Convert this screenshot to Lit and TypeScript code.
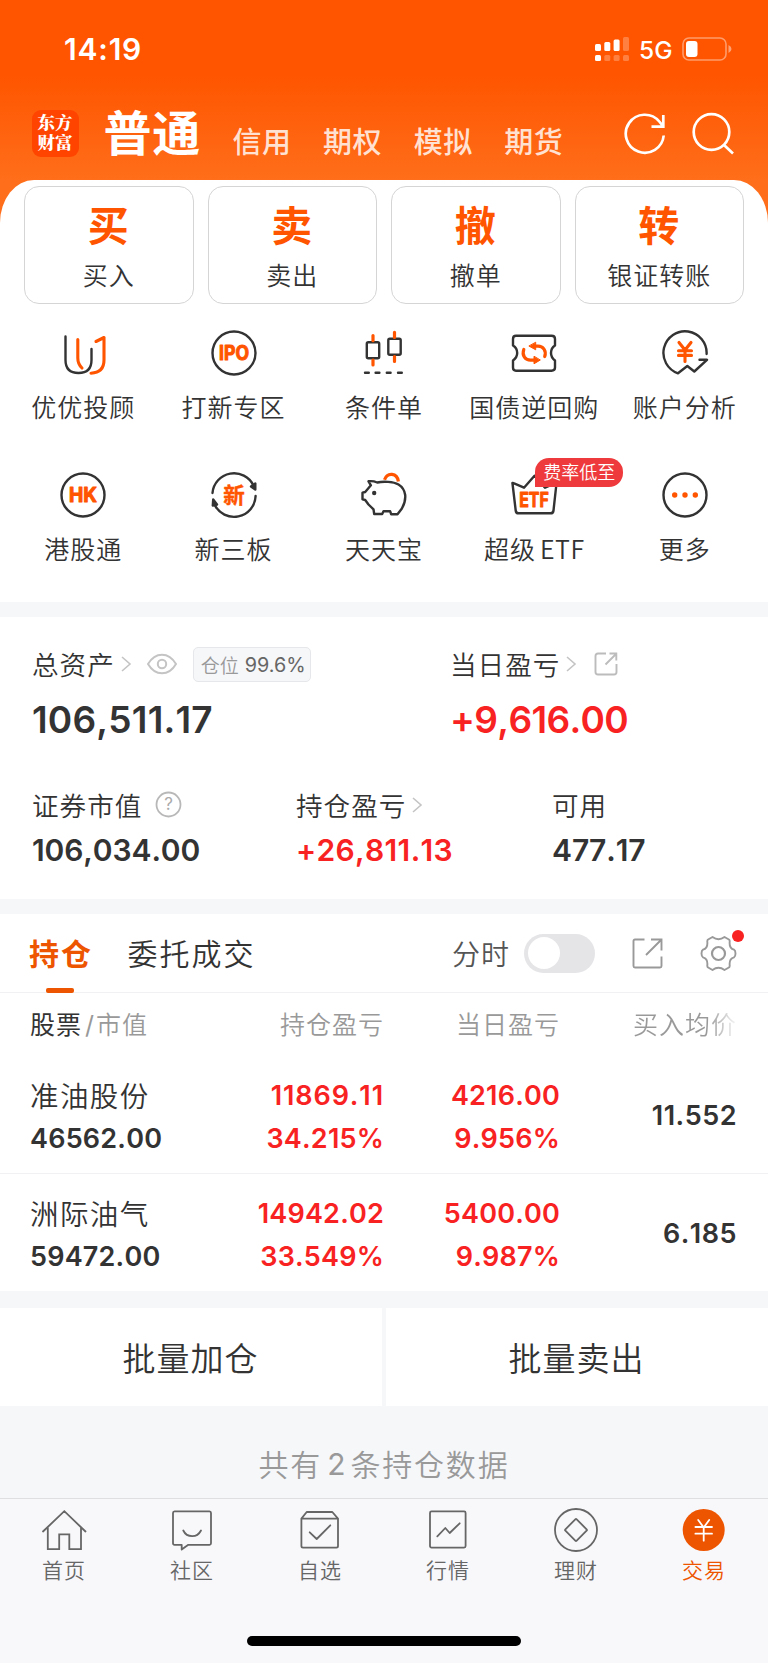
import { LitElement, html, css, svg } from "lit";
import { customElement } from "lit/decorators.js";

const DARK = "#333";
const OR = "#ff5500";

const yuan = (c: string) => svg`<path d="M18 13.5l6 7.5 6-7.5M24 21v11.5M17.5 21.8h13M17.5 26.4h13" fill="none" stroke=${c} stroke-width="3.1" stroke-linecap="round" stroke-linejoin="round"/>`;
const word = (t: string, w: number, y: number) => svg`<text x="24" y=${y} text-anchor="middle" textLength=${w} lengthAdjust="spacingAndGlyphs" font-family="Inter, 'Noto Sans CJK SC', sans-serif" font-weight="700" font-size="19.5" fill=${OR} stroke=${OR} stroke-width="1" stroke-linejoin="round">${t}</text>`;
const ring = svg`<circle cx="24" cy="24" r="21.5"/>`;

const services = [
  { label: "优优投顾", art: svg`<path d="M6.5 7.5V31Q6.5 44 19.5 44Q32.5 44 32.5 31V20"/><path d="M18.8 10.5V29Q18.8 35 23 39M37 12.5L45 8.5V31Q45 43.6 32 44.2" stroke=${OR} stroke-width="3.1"/>` },
  { label: "打新专区", art: svg`${ring}${word("IPO", 30, 31)}` },
  { label: "条件单", art: svg`<rect x="6.8" y="13.2" width="12.4" height="16" rx="1.5"/><rect x="28.300" y="9.7" width="12.4" height="16" rx="1.5"/><path d="M13 6.5v5.2M13 31v5M34.500 3.300v5.200M34.500 27.500v5" stroke=${OR} stroke-width="3.2"/><path d="M5 43.700h3.800M15.600 43.700h3.800M26.800 43.700h3.800M38 43.700h3.800"/>` },
  { label: "国债逆回购", art: svg`<path d="M6 6.800H41.500Q45 6.800 45 10V16.500Q41 19 41 24Q41 28.500 45 31.500V38.500Q45 41.700 41.500 41.700H6Q3 41.700 3 38.500V31.500Q7.200 28.500 7.200 24Q7.200 19 3 16.500V10Q3 6.800 6 6.800Z"/><path d="M34.700 27.500C36.800 21.500 33 17.200 28 17.200H25M13.800 20.500C11.500 26.500 15.500 31.200 20.500 31.200H24.500" stroke=${OR} stroke-width="3.200"/><path d="M25.700 13.600V20.800L19.200 17.200ZM24 27.600V34.800L30 31.200Z" fill=${OR} stroke=${OR} stroke-width="1"/>` },
  { label: "账户分析", art: svg`<path d="M45.600 25A21.600 21.600 0 1 0 17 44.300L26.300 37 33.300 42.500 46 30.800H38.500"/>${yuan(OR)}` },
  { label: "港股通", art: svg`${ring}${word("HK", 28, 31)}` },
  { label: "新三板", art: svg`<path d="M2.500 22A21.600 21.600 0 0 1 43.500 14.500M45.600 25A21.600 21.600 0 0 1 4.500 33.500"/><path d="M41 15.500L45.300 12.500V18.500ZM3.200 28.500L7 33.500L2.800 34.500Z" fill=${DARK} /><text x="24" y="31.500" text-anchor="middle" font-family="'Noto Sans CJK SC', sans-serif" font-weight="700" font-size="21.500" fill=${OR} stroke=${OR} stroke-width=".4">新</text>` },
  { label: "天天宝", art: svg`<g transform="translate(-0.8 0)"><path d="M9.300 10.300C12.500 9.800 15 10.200 18 11.500C24 10.200 34 10.500 39.300 13.500Q45 17 46 24Q46.600 31 42.700 37.500L38.300 43.300H32L31 40.300H24.300L23 43H15L14.300 38.300L9.300 33.500L6 29L3.300 28.300V21.700L6 21L11.700 14.300Z"/><circle cx="15" cy="22" r="2.200" fill=${DARK} stroke="none"/><path d="M25.300 8.800C28 1 38 1.500 39.200 10.500" stroke=${OR} stroke-width="3.200" stroke-linecap="butt"/></g>` },
  { label: "超级", latin: "ETF", badge: "费率低至", art: svg`<path d="M2.500 12.500Q2 11.500 3.500 12.200L14 16.700 24.500 4.700 35 16.700 45 12.500Q46.500 12 46.300 14L43.500 39.500Q43.200 42.300 40.500 42.300H8.500Q6 42.300 5.700 39.500Z"/>${word("ETF", 29.5, 35.5)}` },
  { label: "更多", art: svg`${ring}<g fill=${OR} stroke="none"><circle cx="13.700" cy="24" r="2.700"/><circle cx="24" cy="24" r="2.700"/><circle cx="34.300" cy="24" r="2.700"/></g>` },
];

const tabs = [
  { label: "首页", art: svg`<path d="M3 25.500L24.300 5.200 45.500 25.500M7.800 22V43.200H19.200V28.300H29.300V43.200H41V22" stroke-linejoin="miter"/>` },
  { label: "社区", art: svg`<path d="M6.500 5.400H41.500Q43 5.400 43 7V37.300Q43 38.800 41.500 38.800H20.300L13.700 43.600V38.800H6.500Q5 38.800 5 37.300V7Q5 5.400 6.500 5.400ZM15.300 24.500Q18 30.200 24.200 30.200Q30 30.200 33 24.500"/>` },
  { label: "自选", art: svg`<path d="M5.400 12.600L10.700 6H36.300L42 12.600M5.400 12.600H42V40Q42 41.600 40.400 41.600H7Q5.400 41.600 5.400 40ZM13.700 26.300L20.700 33 34.300 19.300"/>` },
  { label: "行情", art: svg`<rect x="6" y="5.400" width="35.600" height="36.200" rx="1.500"/><path d="M13.300 30.300L21.300 22 25.700 27 35.700 17.300"/>` },
  { label: "理财", art: svg`<circle cx="24" cy="24" r="21"/><rect x="16" y="16" width="16" height="16" rx="1" transform="rotate(45 24 24)"/>` },
  { label: "交易", on: true, art: svg`<circle cx="23.700" cy="24" r="21" fill="#ee5500" stroke="none"/><path d="M18.200 14L23.700 21.500 29.200 14M23.700 21.500V34.700M15.400 21H32M15.400 27.700H32" stroke="#fff" stroke-width="1.800"/>` },
];

const actions = [["买", "买入"], ["卖", "卖出"], ["撤", "撤单"], ["转", "银证转账"]];

const holdings = [
  ["准油股份", "46562.00", "11869.11", "34.215%", "4216.00", "9.956%", "11.552"],
  ["洲际油气", "59472.00", "14942.02", "33.549%", "5400.00", "9.987%", "6.185"],
];

const chevron = html`<svg class="chev" width="12" height="18" viewBox="0 0 12 18"><path d="M2 2l8 7-8 7" fill="none" stroke="#c4c4c4" stroke-width="1.600"/></svg>`;

// Figures with a run of narrow ones get wider tracking so columns stay even.
const figure = (t: string) => html`<span class=${t.includes("11") && t.length > 6 ? "airy" : ""}>${t}</span>`;

@customElement("app-root")
export class AppRoot extends LitElement {
  static styles = css`
    :host { display: block; width: 768px; height: 1663px; overflow: hidden; background: #fff; color: #333; font-family: "Noto Sans CJK SC", sans-serif; font-weight: 350; }
    * { box-sizing: border-box; }
    svg { display: block; flex: none; }
    .num { font-family: Inter, sans-serif; font-weight: 600; font-kerning: none; }
    .red { color: #f82222; }
    .top { height: 225px; background: linear-gradient(#ff5500 75px, #ff6e1a 180px); color: #fff; }
    .status { height: 98px; padding: 0 36px 0 64px; display: flex; align-items: center; }
    .clock { font-size: 30px; letter-spacing: 0.800px; flex: 1; }
    .net { font: 500 24.500px Inter, sans-serif; margin: 2px 11px 0 10px; width: 32px; }
    .head { height: 82px; display: flex; padding: 0 33px 0 32px; }
    .logo { width: 47px; height: 47px; margin-top: 12px; border-radius: 9px; background: #ff4400; font: 900 17.500px/20px "Noto Serif CJK SC", "Noto Sans CJK SC", serif; text-align: center; padding: 2px 1px 0 0; }
    .main { font-size: 48px; font-weight: 700; letter-spacing: 0.800px; line-height: 60px; margin: 2px 0 0 24.500px; width: 129px; }
    .kinds { display: flex; gap: 31.600px; font-size: 29px; font-weight: 500; letter-spacing: 0.500px; line-height: 40px; margin-top: 22px; color: rgba(255,255,255,.82); flex: 1; white-space: nowrap; }
    .tools { display: flex; gap: 24px; margin-top: 14px; }
    .sheet { background: #fff; margin-top: -45px; height: 422px; border-radius: 34px 34px 0 0 / 43px 43px 0 0; padding: 6px 24px 0; }
    .cards { display: grid; grid-template-columns: repeat(4, 1fr); gap: 14px; }
    .card { height: 118px; border: 1px solid #d5d5d5; border-radius: 15px; text-align: center; }
    .glyph { font-size: 41px; line-height: 50px; font-weight: 700; color: #ff5500; margin-top: 11px; padding-right: 1px; }
    .lbl { font-size: 25px; line-height: 36px; letter-spacing: 1px; white-space: nowrap; text-align: center; }
    .card .lbl { margin-top: 8px; }
    .grid { display: grid; grid-template-columns: repeat(5, 150.400px); margin: 25px 0 0 -16px; }
    .item { height: 142px; display: flex; flex-direction: column; align-items: center; position: relative; }
    .item .lbl { margin-top: 11px; }
    .latin { margin-left: 4px; letter-spacing: 0.600px; }
    .badge { position: absolute; left: 76px; top: -13px; width: 88px; height: 29px; border-radius: 14px 14px 14px 0; background: #ee3a3c; color: #fff; font-size: 18px; line-height: 27px; text-align: center; white-space: nowrap; }
    .band { background: #f6f7f9; height: 15px; }
    .assets { height: 282px; padding: 28px 32px 0; }
    .two { display: grid; grid-template-columns: 418px 1fr; }
    .three { display: grid; grid-template-columns: 264px 256px 1fr; margin-top: 43px; }
    .line { display: flex; align-items: center; height: 37px; font-size: 26.600px; letter-spacing: 1px; white-space: nowrap; }
    .chev { margin-left: 5px; }
    .eye { margin-left: 15px; }
    .share { margin-left: 17px; }
    .help { margin-left: 13px; }
    .tag { height: 35px; width: 118px; border: 1px solid #e6e7ea; border-radius: 5px; background: #f6f7f9; font-size: 19px; letter-spacing: 0; color: #999; display: flex; align-items: center; justify-content: center; gap: 6px; margin: 2px 0 0 16px; padding-left: 3px; }
    .tag b { font: 400 19.800px Inter, sans-serif; color: #666; }
    .big { font-size: 37px; line-height: 46px; margin-top: 15px; letter-spacing: 0.200px; }
    .big.red { letter-spacing: -0.650px; }
    .mid { font-size: 30px; line-height: 38px; margin-top: 8px; letter-spacing: -0.100px; }
    .mid.red { letter-spacing: 0.350px; }
    .bar { height: 79px; border-bottom: 1px solid #f1f1f3; display: flex; align-items: center; padding: 0 31px 0 29px; white-space: nowrap; }
    .tab { font-size: 30px; letter-spacing: 2px; position: relative; height: 79px; line-height: 76px; }
    .on { color: #ee5500; font-weight: 700; width: 98.500px; }
    .on::after { content: ""; position: absolute; left: 17px; bottom: 0; width: 28px; height: 5px; border-radius: 2px; background: #ee5500; }
    .orders { flex: 1; }
    .minute { font-size: 28px; letter-spacing: 1px; color: #555; margin-top: -1px; }
    .switch { width: 71px; height: 39px; border-radius: 20px; background: #e5e5e8; margin: 0 37px 0 14px; padding: 3.500px; }
    .knob { width: 32px; height: 32px; border-radius: 50%; background: #fff; }
    .gear { position: relative; margin-left: 37px; }
    .dot { position: absolute; width: 12px; height: 12px; border-radius: 50%; background: #f82222; right: -7px; top: -5px; }
    .cols { display: grid; grid-template-columns: 160px 194px 176px 177px; padding-left: 30px; }
    .th { height: 62px; font-size: 25px; line-height: 60px; color: #999; letter-spacing: 1px; }
    .r { text-align: right; }
    .th b { font-weight: 400; color: #333; }
    .th i { font: 400 25px Inter, sans-serif; margin: 0 2px 0 3px; letter-spacing: 0; }
    .fade { background: linear-gradient(90deg, #999 72%, #f2f2f2 98%); -webkit-background-clip: text; background-clip: text; color: transparent; }
    .row { height: 119px; padding-top: 19px; border-bottom: 1px solid #f1f1f3; }
    .row:last-child { border: 0; height: 117px; padding-top: 18px; }
    .row .num { font-size: 27px; line-height: 42.500px; letter-spacing: 0.200px; padding-top: 1px; }
    .row .worth { padding-top: 2px; }
    .airy { letter-spacing: 0.900px; }
    .name { font-size: 28.500px; letter-spacing: 1.400px; line-height: 42px; white-space: nowrap; }
    .row .avg { align-self: start; padding-top: 21px; letter-spacing: 0.500px; }
    .batch { display: grid; grid-template-columns: 1fr 1fr; gap: 4px; background: #f6f7f9; height: 98px; }
    .batch div { background: #fff; font-size: 33px; letter-spacing: 1px; line-height: 98px; text-align: center; padding-right: 1px; }
    .foot { background: #f6f7f9; height: 92px; display: flex; justify-content: center; align-items: center; padding-top: 22px; font-size: 30px; letter-spacing: 1.800px; color: #999; }
    .foot b { font: 400 30px Inter, sans-serif; margin: 2px 5px 0; letter-spacing: 0; }
    .nav { background: #f8f8fb; border-top: 1px solid #dfdfe2; height: 165px; display: flex; flex-direction: column; align-items: center; }
    .navrow { display: grid; grid-template-columns: repeat(6, 128px); height: 137px; padding-top: 7px; }
    .n { display: flex; flex-direction: column; align-items: center; font-size: 21px; letter-spacing: 1px; color: #666; line-height: 30px; }
    .active { color: #ee5500; }
    .homebar { width: 274px; height: 10px; border-radius: 5px; background: #000; }
  `;

  render() {
    return html`
      <div class="top">
        <div class="status">
          <span class="clock num">14:19</span>
          <svg width="34" height="24" viewBox="0 0 34 24" fill="#fff"><rect y="7" width="6" height="7" rx="1.500"/><rect x="9.300" y="5" width="6" height="9" rx="1.500"/><rect x="18.600" y="2.500" width="6" height="11.500" rx="1.500"/><rect y="18" width="6" height="6" rx="1.500"/><g opacity=".25"><rect x="28" width="6" height="14" rx="1.500"/><rect x="9.300" y="18" width="6" height="6" rx="1.500"/><rect x="18.600" y="18" width="6" height="6" rx="1.500"/><rect x="28" y="18" width="6" height="6" rx="1.500"/></g></svg>
          <span class="net">5G</span>
          <svg width="50" height="24" viewBox="0 0 50 24"><rect x="1" y="1" width="43" height="22" rx="6" fill="none" stroke="#fff" stroke-opacity=".42" stroke-width="1.600"/><rect x="4" y="4" width="11.500" height="16" rx="3" fill="#fff"/><path d="M46.500 8v8q3-1.500 3-4t-3-4z" fill="#fff" opacity=".45"/></svg>
        </div>
        <div class="head">
          <div class="logo"><div>东方</div><div>财富</div></div>
          <div class="main">普通</div>
          <div class="kinds">${["信用", "期权", "模拟", "期货"].map((k) => html`<span>${k}</span>`)}</div>
          <div class="tools">
            <svg width="44" height="44" viewBox="0 0 44 44" fill="none" stroke="#fff" stroke-width="2.700"><path d="M40.700 23.500A19 19 0 1 1 36.300 9.500L39.500 13.500M40.300 3V14.700H28.500"/></svg>
            <svg width="44" height="44" viewBox="0 0 44 44" fill="none" stroke="#fff" stroke-width="2.700"><circle cx="20.500" cy="20" r="17.800"/><path d="M32.500 32.500L42 41.500"/></svg>
          </div>
        </div>
      </div>
      <div class="sheet">
        <div class="cards">${actions.map(([g, l]) => html`<div class="card"><div class="glyph">${g}</div><div class="lbl">${l}</div></div>`)}</div>
        <div class="grid">
          ${services.map((s) => html`<div class="item"><svg width="48" height="48" viewBox="0 0 48 48" fill="none" stroke="#333" stroke-width="2.400" stroke-linecap="round" stroke-linejoin="round">${s.art}</svg>
            <div class="lbl">${s.label}${s.latin ? html`<span class="latin">${s.latin}</span>` : ""}</div>${s.badge ? html`<div class="badge">${s.badge}</div>` : ""}</div>`)}
        </div>
      </div>
      <div class="band"></div>
      <div class="assets">
        <div class="two">
          <div>
            <div class="line"><span>总资产</span>${chevron}
              <svg class="eye" width="30" height="22" viewBox="0 0 30 22" fill="none" stroke="#c4c4c4" stroke-width="2"><path d="M1 11Q6.500 1.700 15 1.700T29 11Q23.500 20.300 15 20.300T1 11Z"/><circle cx="15" cy="11" r="4.200"/></svg>
              <div class="tag">仓位<b>99.6%</b></div></div>
            <div class="num big">106,511.17</div>
          </div>
          <div>
            <div class="line"><span>当日盈亏</span>${chevron}
              <svg class="share" width="24" height="24" viewBox="0 0 24 24" fill="none" stroke="#bcbcbc" stroke-width="1.900"><path d="M12 1.500H4Q1.500 1.500 1.500 4V20Q1.500 22.500 4 22.500H20Q22.500 22.500 22.500 20V12M11.500 12.500L22 2M15.500 1.500H22.300V8.500"/></svg></div>
            <div class="num big red">+9,616.00</div>
          </div>
        </div>
        <div class="three">
          <div>
            <div class="line"><span>证券市值</span><svg class="help" width="27" height="27" viewBox="0 0 27 27"><circle cx="13.500" cy="13.500" r="12" fill="none" stroke="#b8b8b8" stroke-width="1.800"/><text x="13.500" y="19.300" text-anchor="middle" font-family="Inter" font-weight="400" font-size="17" letter-spacing="0" fill="#aaa">?</text></svg></div>
            <div class="num mid">106,034.00</div>
          </div>
          <div><div class="line"><span>持仓盈亏</span>${chevron}</div><div class="num mid red">+26,811.13</div></div>
          <div><div class="line"><span>可用</span></div><div class="num mid">477.17</div></div>
        </div>
      </div>
      <div class="band"></div>
      <div class="bar">
        <div class="tab on">持仓</div><div class="tab orders">委托成交</div>
        <span class="minute">分时</span><div class="switch"><div class="knob"></div></div>
        <svg width="31" height="31" viewBox="0 0 31 31" fill="none" stroke="#999" stroke-width="1.900"><path d="M12.500 1.500H3Q1.500 1.500 1.500 3V28Q1.500 29.500 3 29.500H28Q29.500 29.500 29.500 28V18.500M14 17L29 2M19 1.500H29.500V12.500"/></svg>
        <div class="gear"><svg width="37" height="37" viewBox="0 0 37 37" fill="none" stroke="#999" stroke-width="1.900" stroke-linejoin="round"><path d="M12.500 2Q18.500 6.500 24.500 2L29.300 4.800Q30 6 29.600 8Q29.500 13.500 34 14.700Q35.500 15.500 35.500 18.500T34 22.300Q29.500 23.500 29.600 29Q30 31 29.300 32.200L24.500 35Q18.500 30.500 12.500 35L7.700 32.200Q7 31 7.400 29Q7.500 23.500 3 22.300Q1.500 21.500 1.500 18.500T3 14.700Q7.500 13.500 7.400 8Q7 6 7.700 4.800Z"/><circle cx="18.500" cy="18.500" r="6.500" stroke-width="2.200"/></svg><div class="dot"></div></div>
      </div>
      <div class="cols th"><div><b>股票</b><i>/</i>市值</div><div class="r">持仓盈亏</div><div class="r">当日盈亏</div><div class="r"><span class="fade">买入均价</span></div></div>
      <div>${holdings.map((h) => html`<div class="cols row">
        <div><div class="name">${h[0]}</div><div class="num worth">${h[1]}</div></div>
        <div class="num red r">${figure(h[2])}<br>${figure(h[3])}</div>
        <div class="num red r">${figure(h[4])}<br>${figure(h[5])}</div>
        <div class="num r avg">${h[6]}</div></div>`)}</div>
      <div class="band" style="height:17px"></div>
      <div class="batch"><div>批量加仓</div><div>批量卖出</div></div>
      <div class="foot">共有<b>2</b>条持仓数据</div>
      <div class="nav">
        <div class="navrow">${tabs.map((t) => html`<div class="n ${t.on ? "active" : ""}"><svg width="48" height="48" viewBox="0 0 48 48" fill="none" stroke="#666" stroke-width="1.800" stroke-linecap="round" stroke-linejoin="round">${t.art}</svg><span>${t.label}</span></div>`)}</div>
        <div class="homebar"></div>
      </div>
    `;
  }
}
